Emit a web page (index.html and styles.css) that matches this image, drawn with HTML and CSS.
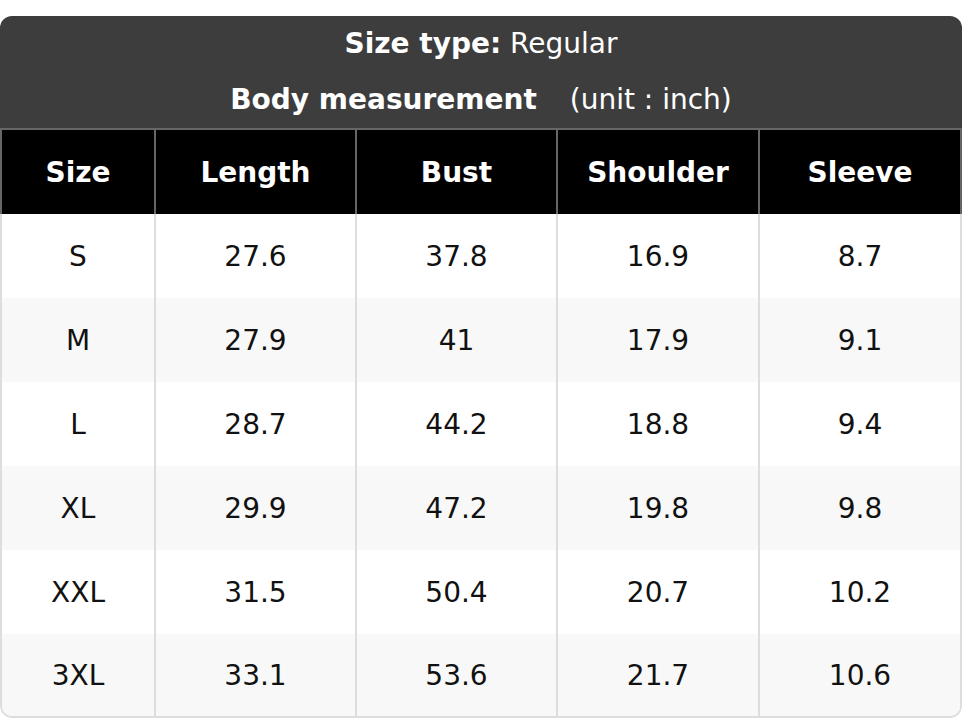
FILE: index.html
```html
<!DOCTYPE html>
<html lang="en">
<head>
<meta charset="utf-8">
<title>Size chart</title>
<link rel="stylesheet" href="styles.css">
</head>
<body>
<div class="card">
  <div class="title">
    <div class="title-line"><b>Size type:</b> Regular</div>
    <div class="title-line"><b>Body measurement</b><span class="unit">(unit : inch)</span></div>
  </div>
  <div class="head">
    <div class="hcell">Size</div>
    <div class="hcell">Length</div>
    <div class="hcell">Bust</div>
    <div class="hcell">Shoulder</div>
    <div class="hcell">Sleeve</div>
  </div>
  <div class="body">
    <div class="row"><div class="cell">S</div><div class="cell">27.6</div><div class="cell">37.8</div><div class="cell">16.9</div><div class="cell">8.7</div></div>
    <div class="row"><div class="cell">M</div><div class="cell">27.9</div><div class="cell">41</div><div class="cell">17.9</div><div class="cell">9.1</div></div>
    <div class="row"><div class="cell">L</div><div class="cell">28.7</div><div class="cell">44.2</div><div class="cell">18.8</div><div class="cell">9.4</div></div>
    <div class="row"><div class="cell">XL</div><div class="cell">29.9</div><div class="cell">47.2</div><div class="cell">19.8</div><div class="cell">9.8</div></div>
    <div class="row"><div class="cell">XXL</div><div class="cell">31.5</div><div class="cell">50.4</div><div class="cell">20.7</div><div class="cell">10.2</div></div>
    <div class="row"><div class="cell">3XL</div><div class="cell">33.1</div><div class="cell">53.6</div><div class="cell">21.7</div><div class="cell">10.6</div></div>
  </div>
</div>
</body>
</html>
```
FILE: styles.css
```css
html, body {
  margin: 0;
  padding: 0;
  background: #ffffff;
}
body {
  padding-top: 16px;
  font-family: "DejaVu Sans", "Noto Sans", sans-serif;
  font-size: 28px;
  color: #111111;
}
.card {
  width: 962px;
  border-radius: 12px 12px 12px 12px;
  overflow: hidden;
}
.title {
  background: #3d3d3d;
  color: #ffffff;
  text-align: center;
  height: 112px;
}
.title-line {
  height: 56px;
  line-height: 56px;
  white-space: nowrap;
}
.title b {
  font-weight: bold;
}
.unit {
  margin-left: 33px;
}
.head {
  display: grid;
  grid-template-columns: 156px 201px 201px 202px 202px;
  background: #000000;
}
.hcell {
  height: 84px;
  border-top: 2px solid #666666;
  border-right: 2px solid #666666;
  color: #ffffff;
  font-weight: bold;
  display: flex;
  align-items: center;
  justify-content: center;
}
.hcell:first-child {
  border-left: 2px solid #666666;
}
.body {
  border: 2px solid #dddddd;
  border-top: none;
  border-radius: 0 0 12px 12px;
  overflow: hidden;
}
.row {
  display: grid;
  grid-template-columns: 154px 201px 201px 202px 200px;
  height: 84px;
}
.row:nth-child(even) {
  background: #f8f8f8;
}
.row:last-child {
  height: 82px;
}
.cell {
  display: flex;
  align-items: center;
  justify-content: center;
  border-right: 2px solid #dddddd;
}
.cell:last-child {
  border-right: none;
}
```
